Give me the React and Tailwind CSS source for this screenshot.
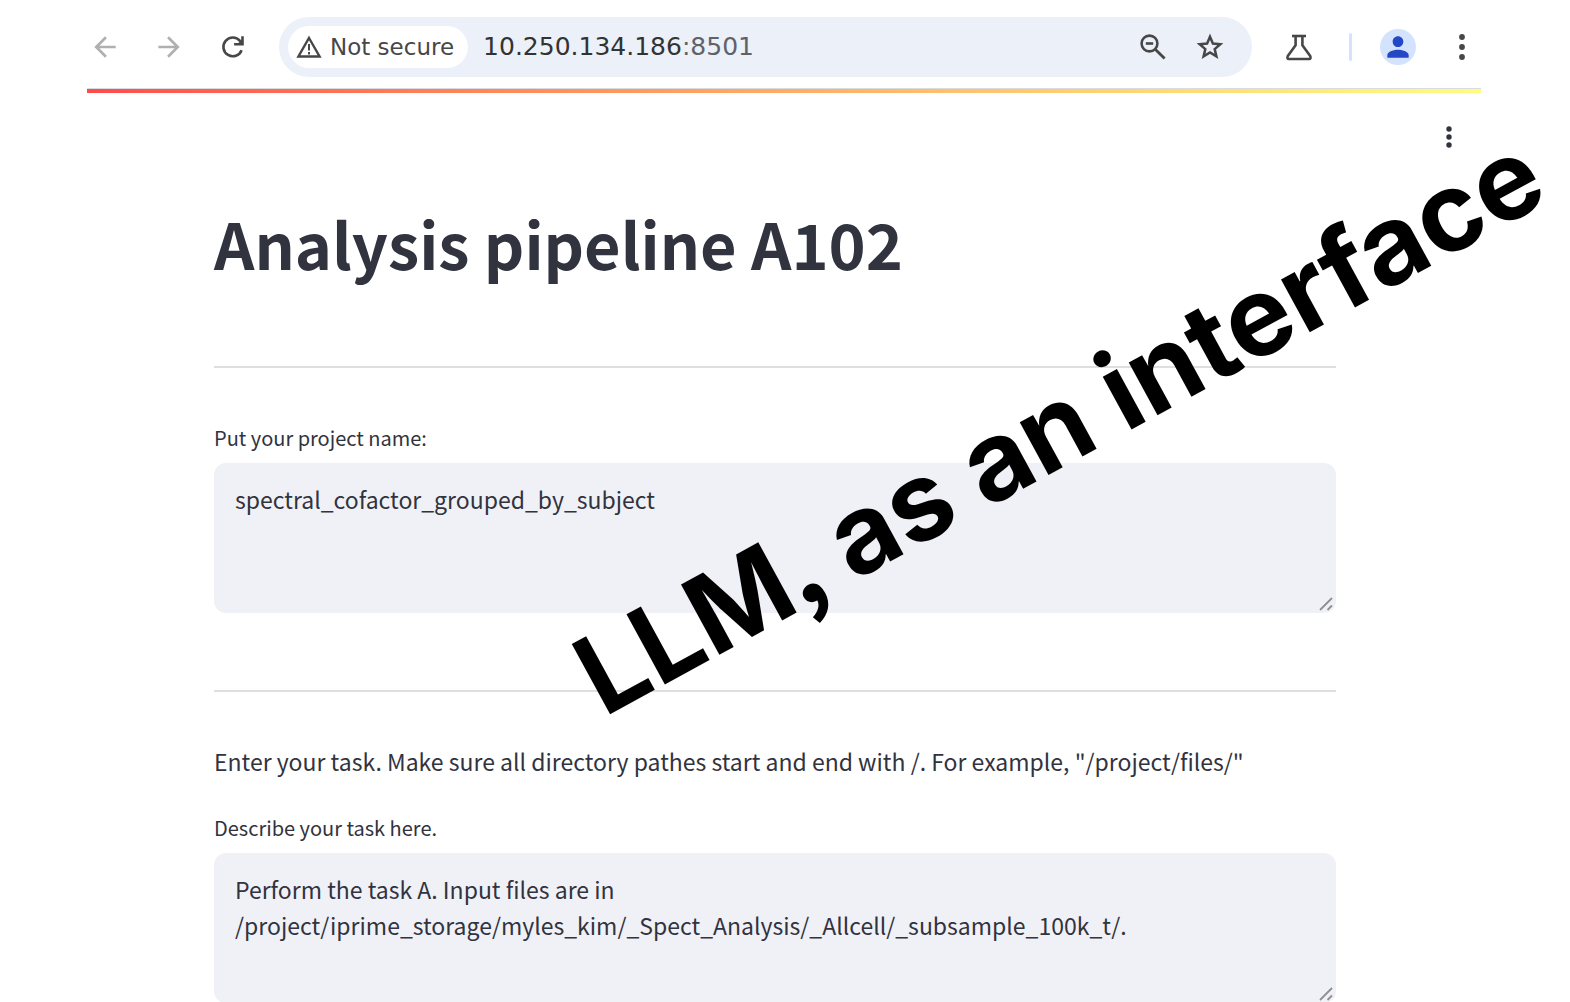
import React, { useId } from "react";
import { MdArrowBack, MdArrowForward, MdPerson } from "react-icons/md";

function DotsIcon({ gap, r, size }) {
  const c = size / 2;
  return (
    <svg width={size} height={size} viewBox={`0 0 ${size} ${size}`} fill="currentColor" aria-hidden="true">
      <circle cx={c} cy={c - gap} r={r} />
      <circle cx={c} cy={c} r={r} />
      <circle cx={c} cy={c + gap} r={r} />
    </svg>
  );
}

function ReloadIcon() {
  return (
    <svg width="32" height="32" viewBox="0 0 32 32" fill="none" stroke="currentColor" strokeWidth="2.6" aria-hidden="true">
      <path d="M24.6 19.2A9.4 9.4 0 1 1 23 9.8l2 2.2" />
      <path d="M25.5 5.2v8h-8.4" />
      <path d="M25.5 8v5.2h-5.4z" fill="currentColor" stroke="none" />
    </svg>
  );
}

function WarningIcon() {
  return (
    <svg width="26" height="24" viewBox="0 0 26 24" fill="none" aria-hidden="true">
      <path d="M13 3 23.6 21.5H2.4z" stroke="currentColor" strokeWidth="2.4" />
      <path d="M13 9v6.5M13 17v2.6" stroke="currentColor" strokeWidth="2" />
    </svg>
  );
}

function ZoomOutIcon() {
  return (
    <svg width="32" height="32" viewBox="0 0 32 32" fill="none" stroke="currentColor" strokeWidth="2.6" aria-hidden="true">
      <circle cx="12.5" cy="12.5" r="7.9" />
      <path d="M18.2 18.2 27.6 27.6" strokeWidth="2.8" />
      <path d="M8.8 12.5h7.4" strokeWidth="2.6" />
    </svg>
  );
}

function StarIcon() {
  return (
    <svg width="32" height="32" viewBox="0 0 32 32" fill="none" stroke="currentColor" strokeWidth="2.5" aria-hidden="true">
      <path d="M16 5.8 18.9 12.6 26.3 13.2 20.7 18.1 22.4 25.4 16 21.5 9.6 25.4 11.3 18.1 5.7 13.2 13.1 12.6z" />
    </svg>
  );
}

function FlaskIcon() {
  return (
    <svg width="36" height="36" viewBox="0 0 36 36" fill="none" stroke="currentColor" strokeWidth="2.6" strokeLinejoin="round" aria-hidden="true">
      <path d="M11 7h14" />
      <path d="M14.6 7v9.2L6.8 27c-.8 1.8-.2 3 1 3h20.4c1.2 0 1.8-1.2 1-3L21.4 16.2V7" />
    </svg>
  );
}

function Grip() {
  return (
    <svg
      className="pointer-events-none absolute right-[3px] bottom-[2px] text-[#8f8f92]"
      width="14"
      height="14"
      viewBox="0 0 14 14"
      stroke="currentColor"
      strokeWidth="1.8"
      aria-hidden="true"
    >
      <path d="M1 13 13 1M8.5 13 13 8.5" />
    </svg>
  );
}

function TextArea({ label, value }) {
  const id = useId();
  return (
    <div>
      <label htmlFor={id} className="block text-[20px] leading-[32px]">
        {label}
      </label>
      <div className="relative mt-[9px]">
        <textarea
          id={id}
          defaultValue={value}
          className="block h-[150px] w-full resize-none overflow-hidden rounded-[12px] bg-[#f0f1f6] px-[21px] py-[18px] text-[23px] leading-[36px] outline-none"
        />
        <Grip />
      </div>
    </div>
  );
}

function BrowserBar() {
  return (
    <header className="flex items-center pt-[17px] pr-[92px] pb-[11px] pl-[89px] font-['DejaVu_Sans',sans-serif] text-[#474747]">
      <nav className="flex gap-[32px]" aria-label="Navigation">
        <button type="button" aria-label="Back" className="text-[#b0b0b0]">
          <MdArrowBack size={32} />
        </button>
        <button type="button" aria-label="Forward" className="text-[#b0b0b0]">
          <MdArrowForward size={32} />
        </button>
        <button type="button" aria-label="Reload">
          <ReloadIcon />
        </button>
      </nav>
      <div className="ml-[30px] flex h-[60px] flex-1 items-center rounded-full bg-[#ecf0f9] pr-[26px] pl-[9px]">
        <button type="button" className="flex h-[42px] items-center gap-[8px] rounded-full bg-white pr-[14px] pl-[8px] text-[23px] whitespace-nowrap">
          <WarningIcon />
          Not secure
        </button>
        <span className="ml-[15px] flex-1 text-[25px] text-[#5f6368]">
          <span className="text-[#333333]">10.250.134.186</span>:8501
        </span>
        <button type="button" aria-label="Zoom out">
          <ZoomOutIcon />
        </button>
        <button type="button" aria-label="Bookmark" className="ml-[25px]">
          <StarIcon />
        </button>
      </div>
      <button type="button" aria-label="Experiments" className="ml-[29px]">
        <FlaskIcon />
      </button>
      <span className="ml-[32px] h-[28px] w-[3px] rounded-full bg-[#d3e3fd]" />
      <button type="button" aria-label="Profile" className="ml-[28px] flex size-[36px] items-center justify-center rounded-full bg-[#d3e3fd] text-[#2448c5]">
        <MdPerson size={32} />
      </button>
      <button type="button" aria-label="Browser menu" className="ml-[30px]">
        <DotsIcon size={32} gap={10} r={2.9} />
      </button>
    </header>
  );
}

export default function App() {
  return (
    <div className="relative min-h-screen overflow-hidden bg-white font-['Noto_Sans_CJK_JP',sans-serif] text-[#31333f]">
      <BrowserBar />
      <div className="mr-[89px] ml-[87px] h-[5px] border-t border-[#d8dce0] bg-linear-to-r from-[#ff4b4b] to-[#fffd80]" />
      <div className="flex justify-end pt-[28px] pr-[105px]">
        <button type="button" aria-label="App menu">
          <DotsIcon size={32} gap={8} r={2.7} />
        </button>
      </div>
      <main className="mr-[234px] ml-[214px]">
        <h1 className="mt-[52px] text-[63px] leading-[76px] font-bold">Analysis pipeline A102</h1>
        <hr className="mt-[85px] border-t-2 border-[#dfdfe1]" />
        <div className="mt-[54px]">
          <TextArea label="Put your project name:" value="spectral_cofactor_grouped_by_subject" />
        </div>
        <hr className="mt-[77px] border-t-2 border-[#dfdfe1]" />
        <p className="mt-[51px] text-[23px] leading-[36px]">
          Enter your task. Make sure all directory pathes start and end with /. For example, "/project/files/"
        </p>
        <div className="mt-[33px]">
          <TextArea
            label="Describe your task here."
            value={"Perform the task A. Input files are in\n/project/iprime_storage/myles_kim/_Spect_Analysis/_Allcell/_subsample_100k_t/."}
          />
        </div>
      </main>
      <div className="pointer-events-none absolute top-[621px] left-[611px] origin-bottom-left rotate-[-28.65deg] font-['Inter',sans-serif] text-[110px] leading-[110px] font-bold whitespace-nowrap text-black">
        LLM<span className="font-['Noto_Sans_CJK_JP',sans-serif] text-[90px] leading-none font-black">,</span> as an interface
      </div>
    </div>
  );
}
